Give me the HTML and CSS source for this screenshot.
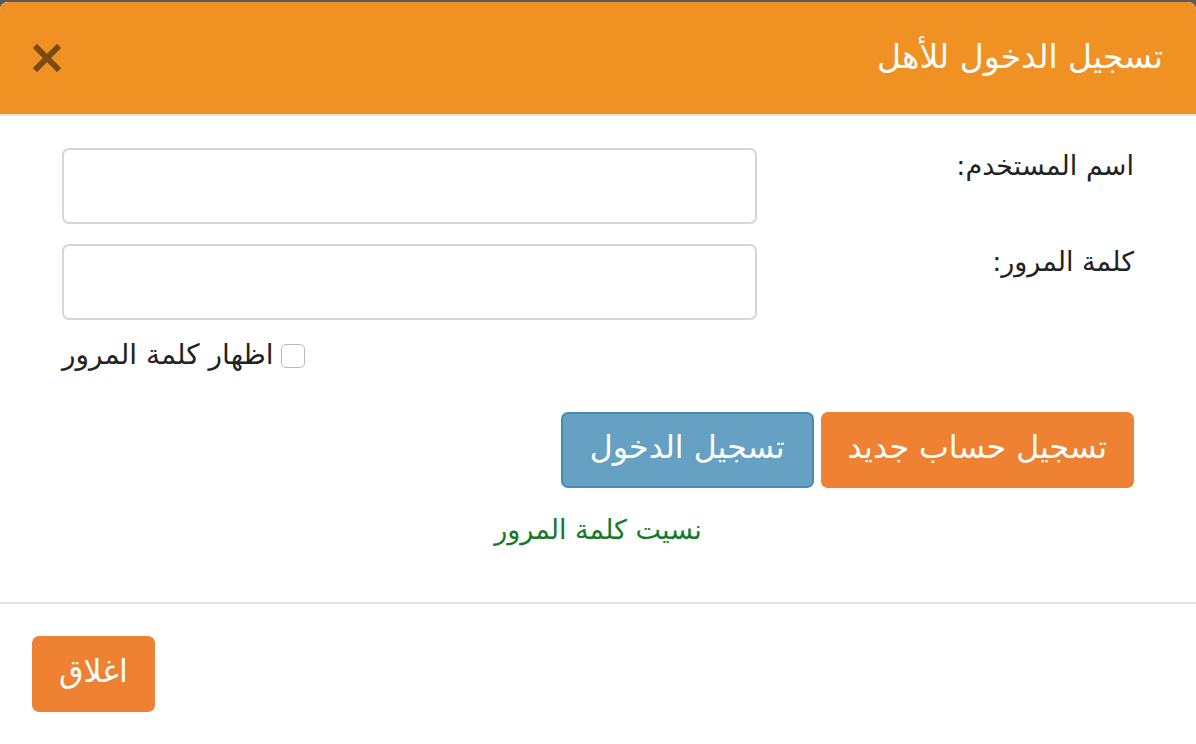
FILE: index.html
```html
<!DOCTYPE html>
<html lang="ar" dir="rtl">
<head>
  <meta charset="UTF-8" />
  <meta name="viewport" content="width=device-width, initial-scale=1.0"/>
  <title>تسجيل الدخول للأهل</title>
  <link rel="stylesheet" href="styles.css">
</head>
<body>
  <div class="modal">
    <div class="modal-header">
      <h4 class="modal-title">تسجيل الدخول للأهل</h4>
      <button class="close" type="button" aria-label="Close">
        <svg width="30" height="28" viewBox="0 0 30 28">
          <path d="M5 4 L25 24 M25 4 L5 24" stroke="#7a4a12" stroke-width="6" stroke-linecap="square"/>
        </svg>
      </button>
    </div>

    <div class="modal-body">
      <form id="login-form">
        <!-- Username -->
        <div class="form-row">
          <label for="username">اسم المستخدم:</label>
          <input type="text" id="username">
        </div>

        <!-- Password -->
        <div class="form-row">
          <label for="password">كلمة المرور:</label>
          <div class="field">
            <input type="password" id="password">
            <label class="show-pass">
              <input type="checkbox" id="show-pass">
              <span>اظهار كلمة المرور</span>
            </label>
          </div>
        </div>

        <div class="actions">
          <button type="button" class="btn btn-orange">تسجيل حساب جديد</button>
          <button type="submit" class="btn btn-blue">تسجيل الدخول</button>
        </div>

        <div class="forgot-wrap">
          <a href="#" class="forgot">نسيت كلمة المرور</a>
        </div>
      </form>
    </div>

    <div class="modal-footer">
      <button type="button" class="btn btn-orange btn-close">اغلاق</button>
    </div>
  </div>

  <script>
    document.getElementById("show-pass").addEventListener("change", function () {
      document.getElementById("password").type = this.checked ? "text" : "password";
    });
  </script>
</body>
</html>
```

FILE: styles.css
```css
html,
body {
  margin: 0;
  height: 100%;
}

body {
  font-family: "DejaVu Sans", sans-serif;
  background-color: #5a5a5a;
  color: #222;
  padding-top: 2px;
  box-sizing: border-box;
  overflow: hidden;
}

.modal {
  background: #fff;
  border-radius: 8px;
  height: 760px;
  overflow: hidden;
}

.modal-header {
  background-color: #f09124;
  height: 112px;
  border-bottom: 2px solid #e6e6e6;
  display: flex;
  align-items: center;
  justify-content: space-between;
  padding: 0 33px 0 32px;
}

.modal-title {
  margin: 0;
  color: #fff;
  font-size: 33px;
  font-weight: normal;
  padding-bottom: 4px;
}

.close {
  background: none;
  border: none;
  padding: 0;
  cursor: pointer;
  display: flex;
}

.modal-body {
  padding: 32px 62px 0 62px;
  height: 488px;
  border-bottom: 2px solid #dfe2e6;
  box-sizing: border-box;
}

.form-row {
  display: flex;
  margin-bottom: 20px;
}

.form-row > label {
  width: 377px;
  font-size: 27px;
  padding-top: 2px;
}

.form-row input[type="text"],
.form-row input[type="password"] {
  width: 695px;
  height: 76px;
  border: 2px solid #d3d6dc;
  border-radius: 7px;
  box-sizing: border-box;
  font-size: 22px;
  padding: 0 14px;
}

.show-pass {
  display: flex;
  align-items: center;
  gap: 7px;
  font-size: 28px;
  margin-top: 18px;
  width: fit-content;
  margin-right: auto;
  cursor: pointer;
}

.show-pass input {
  width: 24px;
  height: 24px;
  margin: 2px 0 0 0;
  appearance: none;
  border: 1px solid #b9bcc0;
  border-radius: 5px;
  background: #fff;
}

.show-pass input:checked {
  background: #66a1c3;
}

.actions {
  display: flex;
  gap: 7px;
  margin-top: 41px;
}

.btn {
  font-family: inherit;
  font-size: 31.6px;
  color: #fff;
  height: 76px;
  border: none;
  border-radius: 7px;
  padding: 0 27px 6px;
  cursor: pointer;
}

.btn-orange {
  background-color: #ee8232;
}

.btn-blue {
  background-color: #66a1c3;
  border: 2px solid #4a89b3;
}

.forgot-wrap {
  text-align: center;
  margin-top: 26px;
}

.forgot {
  color: #15792c;
  font-size: 27px;
  text-decoration: none;
}

.modal-footer {
  display: flex;
  justify-content: flex-end;
  padding: 32px 32px;
}
```
